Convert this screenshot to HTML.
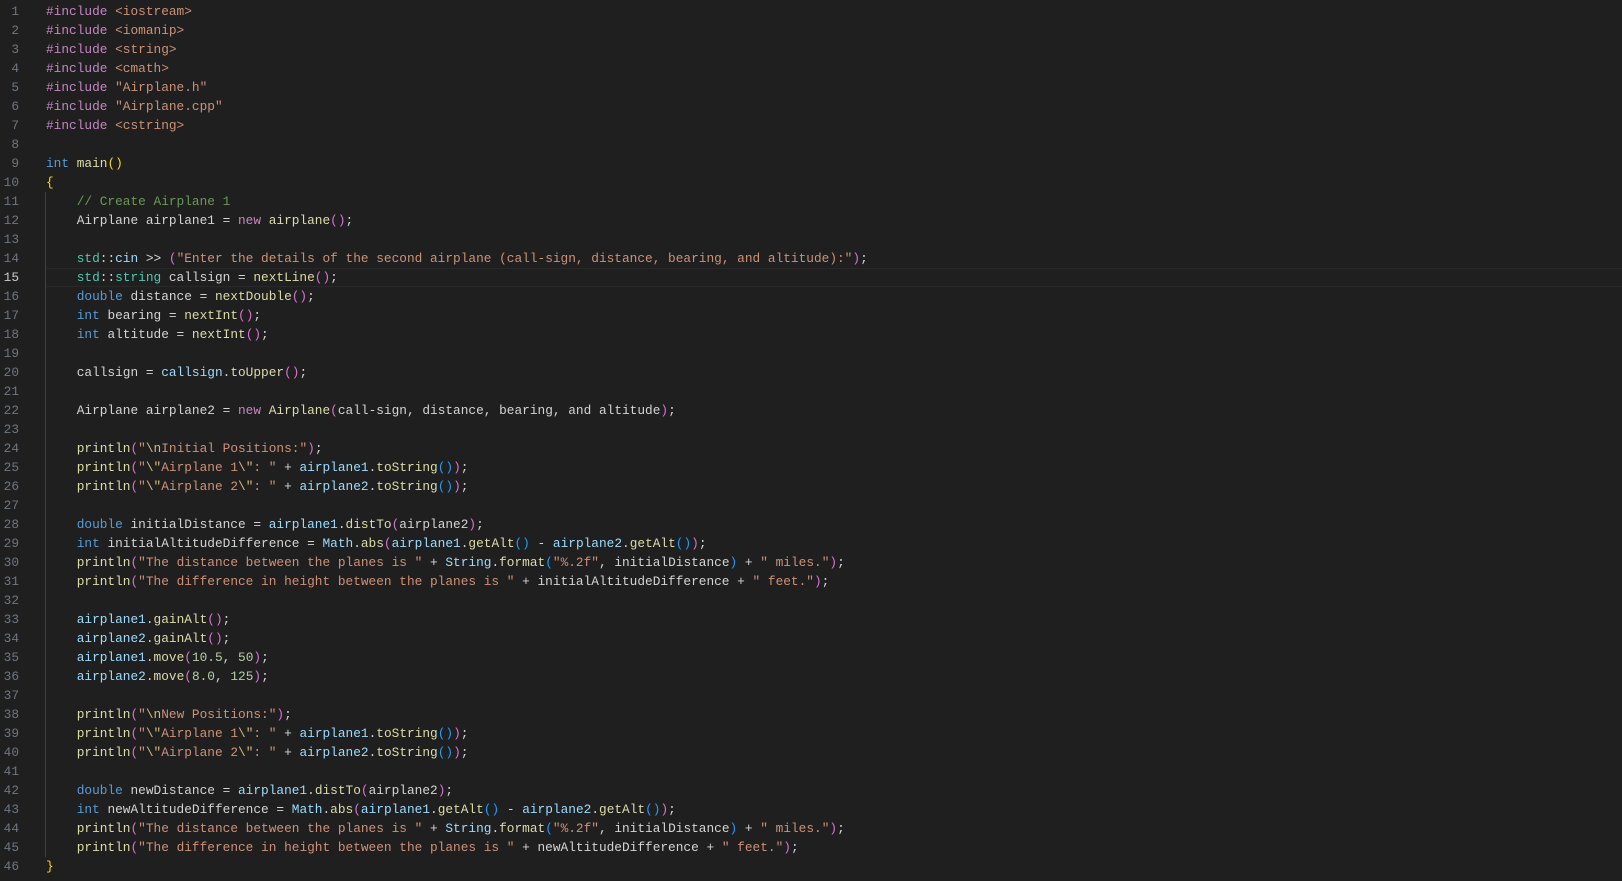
<!DOCTYPE html>
<html><head><meta charset="utf-8"><style>
html,body{margin:0;padding:0;background:#1f1f1f;width:1622px;height:881px;overflow:hidden}
.ed{position:absolute;left:0;top:2px;width:1622px;font-family:"Liberation Mono",monospace;font-size:12.8px;line-height:19px;color:#d4d4d4;white-space:pre}
.code{position:absolute;left:46px;top:0}
.hl{position:absolute;left:45px;right:0;top:268px;height:17px;border:1px solid #282828;border-right:none}
.guide{position:absolute;left:45px;width:1px;background:#404040;top:192px;height:665px}
.k{color:#569cd6}.p{color:#c586c0}.s{color:#ce9178}.f{color:#dcdcaa}.v{color:#9cdcfe}.t{color:#4ec9b0}.c{color:#6a9955}.n{color:#b5cea8}.e{color:#d7ba7d}
.b1{color:#ffd700}.b2{color:#da70d6}.b3{color:#179fff}
</style></head><body>
<div class="hl"></div>
<div class="guide"></div>
<div class="ed"><div style="position:absolute;left:0;top:0;width:19px;text-align:right;color:#6e7681">1
2
3
4
5
6
7
8
9
10
11
12
13
14
<span style="color:#ccc">15</span>
16
17
18
19
20
21
22
23
24
25
26
27
28
29
30
31
32
33
34
35
36
37
38
39
40
41
42
43
44
45
46</div><div class="code"><span class="p">#include</span> <span class="s">&lt;iostream&gt;</span>
<span class="p">#include</span> <span class="s">&lt;iomanip&gt;</span>
<span class="p">#include</span> <span class="s">&lt;string&gt;</span>
<span class="p">#include</span> <span class="s">&lt;cmath&gt;</span>
<span class="p">#include</span> <span class="s">"Airplane.h"</span>
<span class="p">#include</span> <span class="s">"Airplane.cpp"</span>
<span class="p">#include</span> <span class="s">&lt;cstring&gt;</span>

<span class="k">int</span> <span class="f">main</span><span class="b1">()</span>
<span class="b1">{</span>
    <span class="c">// Create Airplane 1</span>
    Airplane airplane1 = <span class="p">new</span> <span class="f">airplane</span><span class="b2">()</span>;

    <span class="t">std</span>::<span class="v">cin</span> &gt;&gt; <span class="b2">(</span><span class="s">"Enter the details of the second airplane (call-sign, distance, bearing, and altitude):"</span><span class="b2">)</span>;
    <span class="t">std</span>::<span class="t">string</span> callsign = <span class="f">nextLine</span><span class="b2">()</span>;
    <span class="k">double</span> distance = <span class="f">nextDouble</span><span class="b2">()</span>;
    <span class="k">int</span> bearing = <span class="f">nextInt</span><span class="b2">()</span>;
    <span class="k">int</span> altitude = <span class="f">nextInt</span><span class="b2">()</span>;

    callsign = <span class="v">callsign</span>.<span class="f">toUpper</span><span class="b2">()</span>;

    Airplane airplane2 = <span class="p">new</span> <span class="f">Airplane</span><span class="b2">(</span>call-sign, distance, bearing, and altitude<span class="b2">)</span>;

    <span class="f">println</span><span class="b2">(</span><span class="s">"<span class="e">\n</span>Initial Positions:"</span><span class="b2">)</span>;
    <span class="f">println</span><span class="b2">(</span><span class="s">"<span class="e">\"</span>Airplane 1<span class="e">\"</span>: "</span> + <span class="v">airplane1</span>.<span class="f">toString</span><span class="b3">()</span><span class="b2">)</span>;
    <span class="f">println</span><span class="b2">(</span><span class="s">"<span class="e">\"</span>Airplane 2<span class="e">\"</span>: "</span> + <span class="v">airplane2</span>.<span class="f">toString</span><span class="b3">()</span><span class="b2">)</span>;

    <span class="k">double</span> initialDistance = <span class="v">airplane1</span>.<span class="f">distTo</span><span class="b2">(</span>airplane2<span class="b2">)</span>;
    <span class="k">int</span> initialAltitudeDifference = <span class="v">Math</span>.<span class="f">abs</span><span class="b2">(</span><span class="v">airplane1</span>.<span class="f">getAlt</span><span class="b3">()</span> - <span class="v">airplane2</span>.<span class="f">getAlt</span><span class="b3">()</span><span class="b2">)</span>;
    <span class="f">println</span><span class="b2">(</span><span class="s">"The distance between the planes is "</span> + <span class="v">String</span>.<span class="f">format</span><span class="b3">(</span><span class="s">"%.2f"</span>, initialDistance<span class="b3">)</span> + <span class="s">" miles."</span><span class="b2">)</span>;
    <span class="f">println</span><span class="b2">(</span><span class="s">"The difference in height between the planes is "</span> + initialAltitudeDifference + <span class="s">" feet."</span><span class="b2">)</span>;

    <span class="v">airplane1</span>.<span class="f">gainAlt</span><span class="b2">()</span>;
    <span class="v">airplane2</span>.<span class="f">gainAlt</span><span class="b2">()</span>;
    <span class="v">airplane1</span>.<span class="f">move</span><span class="b2">(</span><span class="n">10.5</span>, <span class="n">50</span><span class="b2">)</span>;
    <span class="v">airplane2</span>.<span class="f">move</span><span class="b2">(</span><span class="n">8.0</span>, <span class="n">125</span><span class="b2">)</span>;

    <span class="f">println</span><span class="b2">(</span><span class="s">"<span class="e">\n</span>New Positions:"</span><span class="b2">)</span>;
    <span class="f">println</span><span class="b2">(</span><span class="s">"<span class="e">\"</span>Airplane 1<span class="e">\"</span>: "</span> + <span class="v">airplane1</span>.<span class="f">toString</span><span class="b3">()</span><span class="b2">)</span>;
    <span class="f">println</span><span class="b2">(</span><span class="s">"<span class="e">\"</span>Airplane 2<span class="e">\"</span>: "</span> + <span class="v">airplane2</span>.<span class="f">toString</span><span class="b3">()</span><span class="b2">)</span>;

    <span class="k">double</span> newDistance = <span class="v">airplane1</span>.<span class="f">distTo</span><span class="b2">(</span>airplane2<span class="b2">)</span>;
    <span class="k">int</span> newAltitudeDifference = <span class="v">Math</span>.<span class="f">abs</span><span class="b2">(</span><span class="v">airplane1</span>.<span class="f">getAlt</span><span class="b3">()</span> - <span class="v">airplane2</span>.<span class="f">getAlt</span><span class="b3">()</span><span class="b2">)</span>;
    <span class="f">println</span><span class="b2">(</span><span class="s">"The distance between the planes is "</span> + <span class="v">String</span>.<span class="f">format</span><span class="b3">(</span><span class="s">"%.2f"</span>, initialDistance<span class="b3">)</span> + <span class="s">" miles."</span><span class="b2">)</span>;
    <span class="f">println</span><span class="b2">(</span><span class="s">"The difference in height between the planes is "</span> + newAltitudeDifference + <span class="s">" feet."</span><span class="b2">)</span>;
<span class="b1">}</span></div></div>
</body></html>
